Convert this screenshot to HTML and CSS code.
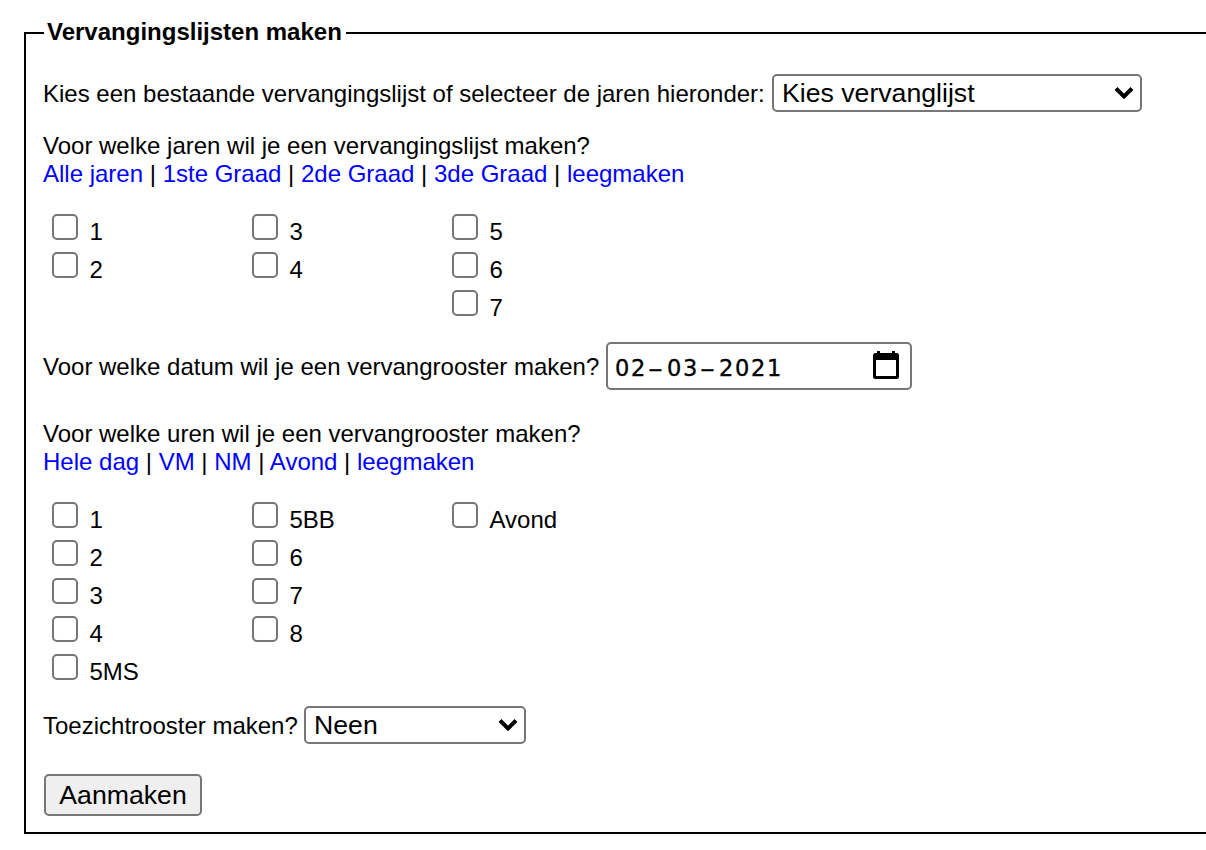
FILE: index.html
```html
<!DOCTYPE html>
<html lang="nl">
<head>
<meta charset="utf-8">
<title>Vervangingslijsten maken</title>
<link rel="stylesheet" href="styles.css">
</head>
<body>
<form>
<fieldset class="panel">
<legend class="title">Vervangingslijsten maken</legend>
<div class="row list-row"><label for="list">Kies een bestaande vervangingslijst of selecteer de jaren hieronder:</label>
<div class="picker picker-wide"><select id="list"><option>Kies vervanglijst</option></select><svg class="chevron" viewBox="0 0 20 14"><path d="M2 2.500 10 10.500 18 2.500"/></svg></div></div>
<div class="question">Voor welke jaren wil je een vervangingslijst maken?<br><a href="#">Alle jaren</a> | <a href="#">1ste Graad</a> | <a href="#">2de Graad</a> | <a href="#">3de Graad</a> | <a href="#">leegmaken</a></div>
<div class="checks">
<div class="column"><label><input type="checkbox"><span>1</span></label><label><input type="checkbox"><span>2</span></label></div>
<div class="column"><label><input type="checkbox"><span>3</span></label><label><input type="checkbox"><span>4</span></label></div>
<div class="column"><label><input type="checkbox"><span>5</span></label><label><input type="checkbox"><span>6</span></label><label><input type="checkbox"><span>7</span></label></div>
</div>
<div class="row date-row"><span>Voor welke datum wil je een vervangrooster maken?</span>
<div class="date"><span class="value">02<span class="dash">-</span>03<span class="dash">-</span>2021</span><svg class="calendar" viewBox="0 0 26 28"><path fill-rule="evenodd" d="M4 0h3v2h12V0h3v2h1.500Q26 2 26 4.500V25.500Q26 28 23.500 28h-21Q0 28 0 25.500v-21Q0 2 2.500 2H4zM3 9v16h20V9z"/></svg></div></div>
<div class="question hours">Voor welke uren wil je een vervangrooster maken?<br><a href="#">Hele dag</a> | <a href="#">VM</a> | <a href="#">NM</a> | <a href="#">Avond</a> | <a href="#">leegmaken</a></div>
<div class="checks">
<div class="column"><label><input type="checkbox"><span>1</span></label><label><input type="checkbox"><span>2</span></label><label><input type="checkbox"><span>3</span></label><label><input type="checkbox"><span>4</span></label><label><input type="checkbox"><span>5MS</span></label></div>
<div class="column"><label><input type="checkbox"><span>5BB</span></label><label><input type="checkbox"><span>6</span></label><label><input type="checkbox"><span>7</span></label><label><input type="checkbox"><span>8</span></label></div>
<div class="column"><label><input type="checkbox"><span>Avond</span></label></div>
</div>
<div class="row watch-row"><label for="watch">Toezichtrooster maken?</label>
<div class="picker picker-small"><select id="watch"><option>Neen</option></select><svg class="chevron" viewBox="0 0 20 14"><path d="M2 2.500 10 10.500 18 2.500"/></svg></div></div>
<button class="submit" type="button">Aanmaken</button>
</fieldset>
</form>
</body>
</html>
```
FILE: styles.css
```css
* { box-sizing: border-box; }
html { overflow: hidden; }
body { margin: 0; padding: 19px 0 0 24px; height: 850px; overflow: hidden; background: #fff; color: #000; font: 24px/28px "Liberation Sans", Arial, sans-serif; }
.panel { width: 1200px; height: 815px; margin: 0; padding: 0 0 0 17px; border: 2px solid #000; }
.title { margin-left: 1px; padding: 0 4px 0 3px; height: 28px; line-height: 26px; font-weight: bold; }
.row { display: flex; white-space: nowrap; }
.list-row { margin-top: 27px; height: 38px; }
.list-row > label { width: 729px; padding-top: 6px; }
.picker { display: grid; height: 38px; }
.picker > * { grid-area: 1 / 1; }
.picker-wide { width: 370px; }
.picker-small { width: 222px; }
select { appearance: none; width: 100%; height: 100%; margin: 0; padding: 0 0 0 8px; border: 2px solid #767676; border-radius: 5px; background: #fff; color: #000; font: 26.67px/30px "Liberation Sans", Arial, sans-serif; }
.chevron { width: 20px; height: 14px; margin: 12px 8px 0 0; justify-self: end; pointer-events: none; fill: none; stroke: #000; stroke-width: 4; }
.question { margin-top: 20px; height: 56px; white-space: nowrap; }
a { color: #00f; text-decoration: none; }
.checks { display: flex; margin: 26px 0 0 9px; }
.column { width: 200px; }
.column label { display: flex; gap: 11.5px; height: 38px; }
.column span { padding-top: 4px; }
input { appearance: none; width: 26px; height: 26px; margin: 0; border: 2px solid #767676; border-radius: 5px; background: #fff; }
.date-row { margin-top: 14px; height: 48px; }
.date-row > span { width: 563px; padding-top: 11px; }
.date { display: flex; justify-content: space-between; width: 306px; height: 48px; padding: 7px 11px 0 7px; border: 2px solid #767676; border-radius: 5px; }
.value { font: 22.5px/35px "DejaVu Sans", sans-serif; letter-spacing: 1.7px; -webkit-text-stroke: 0.35px #000; }
.dash { display: inline-block; width: 20px; padding-right: 1.5px; letter-spacing: 0; text-align: center; transform: scaleX(1.9); }
.calendar { width: 26px; height: 28px; }
.hours { margin-top: 30px; }
.watch-row { margin-top: 14px; height: 38px; }
.watch-row > label { width: 261px; padding-top: 6px; }
.submit { display: block; width: 158px; height: 42px; margin: 30px 0 0 1px; padding: 0; border: 2px solid #767676; border-radius: 5px; background: #efefef; color: #000; font: 26.67px/30px "Liberation Sans", Arial, sans-serif; }
```
